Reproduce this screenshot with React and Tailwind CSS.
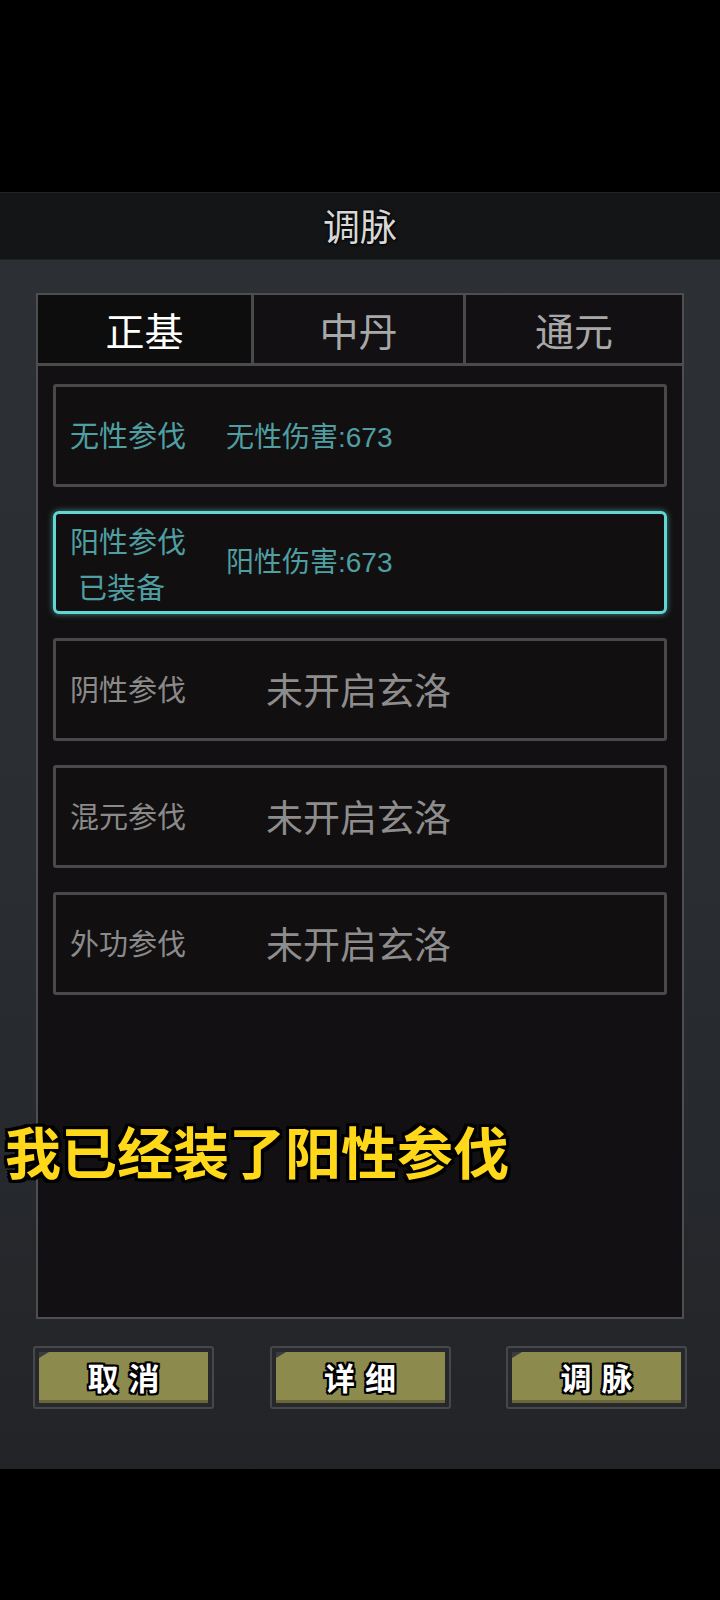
import React from "react";

const FONT = { fontFamily: '"Noto Sans CJK SC", "Noto Sans", sans-serif' };

function Row({ label, sub, value, locked, selected }) {
  const labelColor = locked ? "text-[#8a8a8a]" : "text-[#4f9ea2]";
  return (
    <div
      className={
        "flex h-[103px] items-center border-[3px] bg-[#120f10] " +
        (selected
          ? "rounded-[6px] border-[#62d6d2] shadow-[0_0_6px_rgba(98,214,210,0.6)]"
          : "rounded-[3px] border-[#4a4849]")
      }
    >
      <div className={"flex w-[170px] flex-col pl-[14px] " + (sub ? "" : "-translate-y-[2px]")}>
        <span className={"text-[29px] leading-[46px] " + labelColor}>{label}</span>
        {sub && (
          <span className={"pl-[8px] text-[29px] leading-[46px] " + labelColor}>{sub}</span>
        )}
      </div>
      {locked ? (
        <span className="pl-[40px] text-[37px] text-[#8d8d8d]">未开启玄洛</span>
      ) : (
        <span
          className={"text-[28px] text-[#4f9ea2] " + (sub ? "" : "translate-y-[2px]")}
          style={{ fontFamily: '"Liberation Sans", "Noto Sans CJK SC", sans-serif' }}
        >
          {value}
        </span>
      )}
    </div>
  );
}

function Btn({ text }) {
  return (
    <div className="flex h-[63px] w-[181px] items-center justify-center rounded-[3px] border-2 border-[#44474c] bg-[#26282c] p-[4px]">
      <div className="relative flex h-full w-full items-center justify-center bg-[#8c8a4c] shadow-[inset_0_-3px_0_rgba(0,0,0,0.25)]">
        <div className="absolute left-0 top-0 h-0 w-0 border-r-[10px] border-t-[6px] border-r-transparent border-t-[#3a3c40]" />
        <span className="pl-[10px] text-[31px] font-bold tracking-[10px] text-white [text-shadow:-2px_-2px_0_#000,2px_-2px_0_#000,-2px_2px_0_#000,2px_2px_0_#000,0_2px_0_#000,0_-2px_0_#000,2px_0_0_#000,-2px_0_0_#000]">
          {text}
        </span>
      </div>
    </div>
  );
}

export default function App() {
  return (
    <div className="relative flex h-[1600px] w-[720px] flex-col bg-black" style={FONT}>
      <div className="h-[192px]" />
      <div className="flex h-[68px] items-center justify-center border-y border-[#202224] bg-[#141516]">
        <span className="text-[37px] text-[#d8d8d8] [text-shadow:0_0_3px_#000,1px_1px_2px_#000]">调脉</span>
      </div>
      <div className="flex h-[1209px] flex-col bg-gradient-to-b from-[#2c2f34] via-[#2a2d31] to-[#222428] px-[36px] pt-[33px]">
        <div className="flex h-[1026px] flex-col border-2 border-[#4e4e50] bg-[#121012]">
          <div className="flex h-[71px] border-b-[3px] border-[#4a4a4c]">
            <div className="flex w-[216px] items-center justify-center border-r-[3px] border-[#4a4a4c] bg-[#0e0d0e]">
              <span className="text-[39px] text-white">正基</span>
            </div>
            <div className="flex w-[212px] items-center justify-center border-r-[3px] border-[#4a4a4c]">
              <span className="text-[39px] text-[#a8a8a8]">中丹</span>
            </div>
            <div className="flex flex-1 items-center justify-center">
              <span className="text-[39px] text-[#a8a8a8]">通元</span>
            </div>
          </div>
          <div className="flex flex-col gap-[24px] px-[15px] pt-[18px]">
            <Row label="无性参伐" value="无性伤害:673" />
            <Row label="阳性参伐" sub="已装备" value="阳性伤害:673" selected />
            <Row label="阴性参伐" locked />
            <Row label="混元参伐" locked />
            <Row label="外功参伐" locked />
          </div>
        </div>
        <div className="-mx-[3px] mt-[27px] flex justify-between">
          <Btn text="取消" />
          <Btn text="详细" />
          <Btn text="调脉" />
        </div>
      </div>
      <div className="absolute left-[5px] top-[1112px]">
        <span className="text-[56px] font-bold leading-[76px] text-[#ffd81a] [text-shadow:-3px_-3px_0_#000,3px_-3px_0_#000,-3px_3px_0_#000,3px_3px_0_#000,0_3px_0_#000,0_-3px_0_#000,3px_0_0_#000,-3px_0_0_#000]">
          我已经装了阳性参伐
        </span>
      </div>
    </div>
  );
}
